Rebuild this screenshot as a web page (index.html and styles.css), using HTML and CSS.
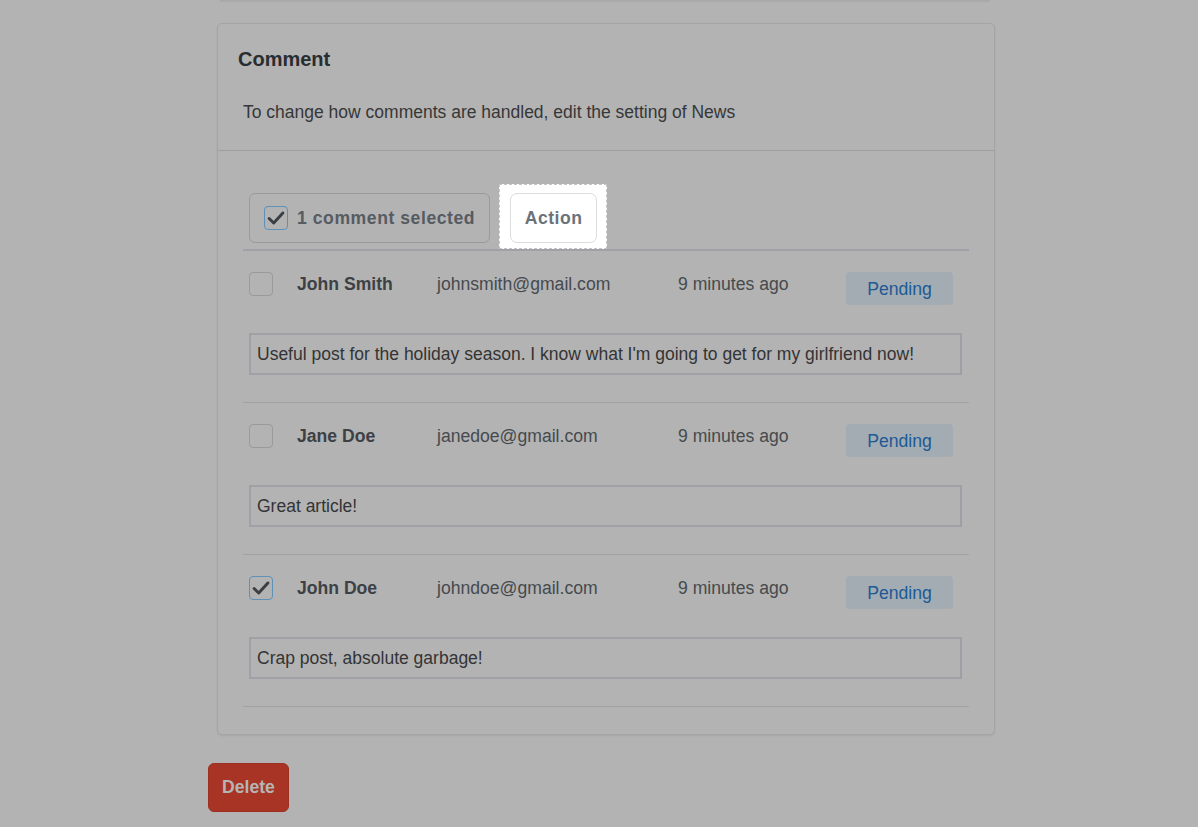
FILE: index.html
```html
<!DOCTYPE html>
<html lang="en">
<head>
<meta charset="utf-8">
<title>Comments</title>
<link rel="stylesheet" href="styles.css">
</head>
<body>
<div class="prev-card"></div>
<section class="card">
  <header class="card-header">
    <h2 class="card-title">Comment</h2>
    <p class="card-desc">To change how comments are handled, edit the setting of News</p>
  </header>
  <div class="card-body">
    <div class="toolbar">
      <div class="selected-box">
        <span class="checkbox checked"><svg viewBox="0 0 24 24"><path d="M4.5 12.5 L9.5 17.5 L19.5 6.5"/></svg></span>
        <span class="selected-text">1 comment selected</span>
      </div>
      <span class="tour-highlight"><button class="action-btn">Action</button></span>
    </div>

    <div class="comment-row">
      <div class="row-head">
        <span class="checkbox"></span>
        <span class="name">John Smith</span>
        <span class="email">johnsmith@gmail.com</span>
        <span class="time">9 minutes ago</span>
        <span class="badge">Pending</span>
      </div>
      <div class="comment-text">Useful post for the holiday season. I know what I'm going to get for my girlfriend now!</div>
    </div>

    <div class="comment-row">
      <div class="row-head">
        <span class="checkbox"></span>
        <span class="name">Jane Doe</span>
        <span class="email">janedoe@gmail.com</span>
        <span class="time">9 minutes ago</span>
        <span class="badge">Pending</span>
      </div>
      <div class="comment-text">Great article!</div>
    </div>

    <div class="comment-row">
      <div class="row-head">
        <span class="checkbox checked"><svg viewBox="0 0 24 24"><path d="M4.5 12.5 L9.5 17.5 L19.5 6.5"/></svg></span>
        <span class="name">John Doe</span>
        <span class="email">johndoe@gmail.com</span>
        <span class="time">9 minutes ago</span>
        <span class="badge">Pending</span>
      </div>
      <div class="comment-text">Crap post, absolute garbage!</div>
    </div>
  </div>
</section>
<div class="actions">
  <button class="delete-btn">Delete</button>
</div>
</body>
</html>
```

FILE: styles.css
```css
* { box-sizing: border-box; }

html, body {
  margin: 0;
  padding: 0;
  background: #b3b3b3;
  font-family: "Liberation Sans", Arial, sans-serif;
  font-size: 17.6px;
  color: #3a3a3a;
}

.prev-card {
  margin-left: 220px;
  width: 770px;
  height: 1px;
  background: #a9a9a9;
  box-shadow: 0 1px 1px rgba(0,0,0,0.06);
}

.card {
  margin: 22px 0 0 217px;
  width: 778px;
  border: 1px solid #a4a4a4;
  border-radius: 5px;
  box-shadow: 0 1px 2px rgba(0,0,0,0.08);
}

.card-header {
  padding: 23px 20px 28px 20px;
  border-bottom: 1px solid #9e9e9e;
}

.card-title {
  margin: 0;
  font-size: 20px;
  line-height: 24px;
  font-weight: bold;
  color: #2a2d30;
}

.card-desc {
  margin: 31px 0 0 5px;
  font-size: 17.5px;
  line-height: 20px;
  color: #363738;
}

.card-body {
  padding: 42px 25px 27px 25px;
}

.toolbar {
  display: flex;
  align-items: center;
  gap: 20px;
  padding: 0 0 6px 6px;
  border-bottom: 2px solid #a0a1a8;
}

.selected-box {
  display: flex;
  align-items: center;
  gap: 9px;
  height: 50px;
  padding: 0 14px 0 14px;
  border: 1px solid #999a9b;
  border-radius: 6px;
}

.selected-text {
  font-weight: bold;
  letter-spacing: 0.55px;
  color: #565c62;
}

.checkbox {
  display: inline-flex;
  width: 24px;
  height: 24px;
  border: 1px solid #989a9c;
  border-radius: 4px;
  flex: none;
}

.checkbox.checked {
  border-color: #5f90b6;
}

.checkbox svg {
  width: 22px;
  height: 22px;
}

.checkbox svg path {
  fill: none;
  stroke: #3b3f44;
  stroke-width: 3.2;
  stroke-linecap: round;
  stroke-linejoin: round;
}

.tour-highlight {
  display: inline-flex;
  margin: -9px -10px -6px -11px;
  padding: 8px 9px 5px 10px;
  background: #ffffff;
  border: 1px dashed #c4c4c4;
}

.action-btn {
  height: 50px;
  width: 87px;
  background: #ffffff;
  border: 1px solid #dcdcdc;
  border-radius: 7px;
  font-family: inherit;
  font-size: 17.6px;
  font-weight: bold;
  letter-spacing: 0.5px;
  color: #6b727a;
  padding: 0;
}

.comment-row {
  padding: 21px 0 27px 6px;
  border-bottom: 1px solid #a2a2a2;
}

.row-head {
  display: grid;
  grid-template-columns: 48px 140px 241px 168px 107px;
  align-items: start;
}

.name {
  padding-top: 1px;
  font-weight: bold;
  color: #3d4145;
  line-height: 22px;
}

.email, .time {
  padding-top: 1px;
  color: #464a4e;
  line-height: 22px;
}

.badge {
  height: 33px;
  padding-top: 6px;
  text-align: center;
  background: #a3abb3;
  color: #1b5a96;
  border-radius: 4px;
  line-height: 22px;
}

.comment-text {
  margin-top: 28px;
  width: 713px;
  height: 42px;
  border: 2px solid #9fa0a6;
  padding: 0 6px;
  display: flex;
  align-items: center;
  font-size: 17.5px;
  color: #333435;
}

.actions {
  margin: 28px 0 0 208px;
}

.delete-btn {
  width: 81px;
  height: 49px;
  background: #a83426;
  border: 1px solid #9c2f22;
  border-radius: 6px;
  font-family: inherit;
  font-size: 17.6px;
  font-weight: bold;
  color: #b5b5b5;
  padding: 0;
}
```
